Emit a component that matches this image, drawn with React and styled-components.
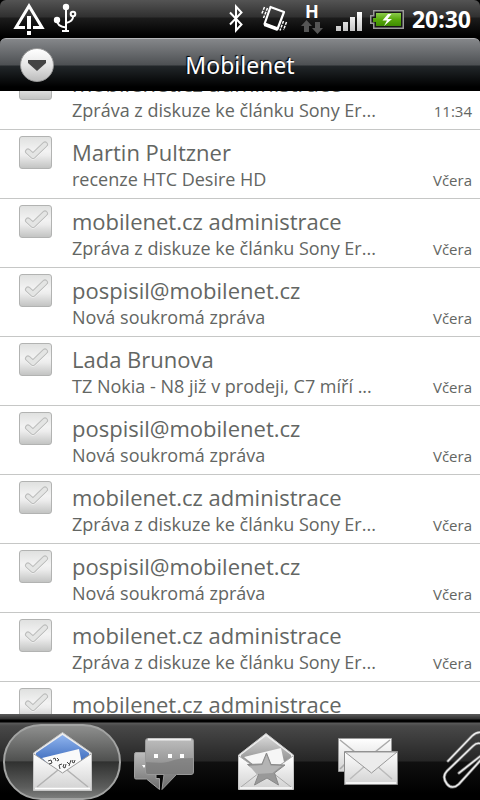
import React, { useLayoutEffect, useRef, useState } from 'react';
import styled, { createGlobalStyle } from 'styled-components';

const GlobalStyle = createGlobalStyle`
  * {
    box-sizing: border-box;
  }

  body {
    margin: 0;
    background: #000;
    font-family: 'Open Sans', 'Noto Sans', sans-serif;
  }
`;

const Screen = styled.div`
  display: flex;
  flex-direction: column;
  height: 100vh;
  overflow: hidden;
`;

const StatusBar = styled.div`
  display: flex;
  align-items: center;
  justify-content: space-between;
  flex: none;
  height: 38px;
  padding: 0 9px 0 12px;
  border-radius: 6px 6px 0 0;
  background: linear-gradient(#545454 0, #303030 17px, #1c1c1c 18px, #000 36px);
  color: #fff;
`;

const StatusGroup = styled.div`
  display: flex;
  align-items: center;
  gap: ${({ $gap }) => $gap}px;

  svg {
    display: block;
  }
`;

const Network = styled.span`
  display: flex;
  flex-direction: column;
  align-items: center;
  width: 24px;
  font: bold 18px/16px 'Noto Sans', sans-serif;
`;

const Clock = styled.time`
  font-family: 'Noto Sans', sans-serif;
  font-size: 23px;
  line-height: 32px;
  font-weight: bold;
`;

const TitleBar = styled.header`
  display: grid;
  grid-template-columns: 34px 1fr 34px;
  align-items: center;
  flex: none;
  height: 53px;
  padding: 0 20px;
  border-top: 1px solid #b4b6b8;
  border-radius: 6px 6px 0 0;
  background: linear-gradient(#85878a 0, #4d5053 26px, #22272a 27px, #000 48px);
`;

const Title = styled.h1`
  margin: 0;
  color: #fff;
  font-family: 'Noto Sans', sans-serif;
  font-size: 23px;
  line-height: 32px;
  font-weight: normal;
  text-align: center;
  text-shadow: -1px -1px 1px #000;
`;

const MenuButton = styled.button`
  display: flex;
  align-items: center;
  justify-content: center;
  width: 34px;
  height: 34px;
  padding: 0;
  border: 1px solid #9a9a9a;
  border-radius: 50%;
  background: linear-gradient(#fff, #e6e6e6 50%, #bcbcbc);
`;

const MessageList = styled.ul`
  flex: 1 1 0;
  min-height: 0;
  margin: 0;
  padding: 0;
  overflow-y: auto;
  scrollbar-width: none;
  background: #fff;
  list-style: none;
`;

const MessageRow = styled.li`
  display: flex;
  gap: 20px;
  height: 69px;
  padding: 6px 8px 0 19px;
  border-bottom: 1px solid #c6c7c6;
  color: #636663;
`;

const CheckLabel = styled.label`
  display: grid;
  flex: none;
  width: 33px;
  height: 33px;

  svg {
    grid-area: 1 / 1;
    pointer-events: none;
  }
`;

const CheckInput = styled.input`
  grid-area: 1 / 1;
  appearance: none;
  width: 33px;
  height: 33px;
  margin: 0;
  border: 1px solid #b2b3b2;
  border-radius: 3px;
  background: linear-gradient(#e0e1e0, #f3f3f3 45%, #ececec 60%, #c3c4c3);
`;

const MessageBody = styled.div`
  flex: 1;
  min-width: 0;
`;

const Sender = styled.div`
  padding-top: 2px;
  font-size: 22px;
  line-height: 28px;
  white-space: nowrap;
`;

const SubjectLine = styled.div`
  display: flex;
  align-items: baseline;
  justify-content: space-between;
  font-size: 18px;
  line-height: 26px;
  white-space: nowrap;
`;

const Received = styled.time`
  font-size: 15px;
`;

const TabBar = styled.nav`
  display: flex;
  flex: none;
  height: 86px;
  padding: 10px 0 0 11px;
  overflow: hidden;
  background: linear-gradient(#5c5c5c 0, #303030 5px, #000 6px, #000 8px, #5a5a5a 9px, #484848 12px, #262626 47px, #101010 48px, #000 80px);
`;

const Tab = styled.button`
  display: flex;
  align-items: center;
  justify-content: center;
  flex: none;
  width: ${({ $active }) => ($active ? 118 : 102)}px;
  height: 76px;
  margin: ${({ $active }) => ($active ? '0 -8px' : '0')};
  padding: 0;
  border: ${({ $active }) => ($active ? '2px solid #a2a3a2' : '0')};
  border-radius: 38px;
  background: ${({ $active }) =>
    $active ? 'linear-gradient(#8e8f8e, #505150 48%, #303130 50%, #5c5d5c 85%, #7c7d7c)' : 'none'};
  overflow: hidden;

  svg {
    flex: none;
  }
`;

const WarningIcon = () => (
  <svg width="34" height="34" viewBox="12 2 34 34" aria-hidden="true">
    <path d="M25 27.5H16L29 6l13 21.5h-9" fill="none" stroke="#fff" strokeWidth="3" />
    <path d="M27 16h4v13h-4zM27 31h4v4h-4z" fill="#fff" />
  </svg>
);

const UsbIcon = () => (
  <svg width="26" height="34" viewBox="53 2 26 34" aria-hidden="true">
    <g fill="none" stroke="#fff" strokeWidth="2">
      <path d="M66 7v24M62 31h7M57 20c0 5 4 7 9 7.500M73 17c0 3-3 5-7 6" />
      <circle cx="73" cy="14" r="2.300" />
    </g>
    <circle cx="66" cy="7" r="3.200" fill="#fff" />
    <circle cx="57" cy="20" r="3.200" fill="#fff" />
  </svg>
);

const BluetoothIcon = () => (
  <svg width="16" height="30" viewBox="226 4 16 30" aria-hidden="true">
    <path d="M228 12.500l11.500 12L234 30.500V6.500l5.500 6L228 24.500" fill="none" stroke="#fff" strokeWidth="2" />
  </svg>
);

const VibrateIcon = () => (
  <svg width="28" height="30" viewBox="259 4 28 30" aria-hidden="true">
    <path d="M269.500 7l13.500 5-6.500 17-13-5z" fill="none" stroke="#fff" strokeWidth="2.200" strokeLinejoin="round" />
    <path d="M264 22.500l13.500 5-1.200 3.500-13.500-5z" fill="#fff" />
    <path d="M263.500 7l-3 7.500M266.500 8l-4 10M285.500 22l-3 8M282.500 21l-3.500 9.500" stroke="#fff" strokeWidth="1.500" strokeDasharray="3 1" />
  </svg>
);

const DataArrows = () => (
  <svg width="24" height="16" viewBox="299 19 24 16" aria-hidden="true">
    <path d="M305.500 20l5.500 6h-3v6h-5v-6h-3z" fill="#555" />
    <path d="M316.500 34l-5.500-6h3v-6h5v6h3z" fill="#555" />
  </svg>
);

const SignalIcon = () => (
  <svg width="27" height="30" viewBox="336 4 27 30" aria-hidden="true">
    <defs>
      <linearGradient id="bars" x1="0" y1="0" x2="0" y2="1">
        <stop offset="0" stopColor="#fff" />
        <stop offset="1" stopColor="#c4c4c4" />
      </linearGradient>
    </defs>
    <path d="M336 26h5v5h-5zM343 22h5v9h-5zM350 17h5v14h-5zM357 12h5v19h-5z" fill="url(#bars)" />
  </svg>
);

const BatteryIcon = () => (
  <svg width="35" height="22" viewBox="370 8 35 22" aria-hidden="true">
    <defs>
      <linearGradient id="charge" x1="0" y1="0" x2="0" y2="1">
        <stop offset="0" stopColor="#8ccc4c" />
        <stop offset=".5" stopColor="#57a80c" />
        <stop offset="1" stopColor="#3e8c00" />
      </linearGradient>
    </defs>
    <path d="M373 10h31v19h-31v-5h-3v-9h3z" fill="#9a9a9a" />
    <path d="M374.500 11.500h28v16h-28v-5h-3v-6h3z" fill="#171717" />
    <path d="M376 13h25v13h-25v-4h-3v-4h3z" fill="url(#charge)" />
    <path d="M388 14l-5.500 6.500h4.500l-3 5.500 8-7h-4.500l4-5z" fill="#fff" />
  </svg>
);

const TickIcon = () => (
  <svg width="33" height="33" viewBox="0 0 33 33" aria-hidden="true">
    <g fill="none" strokeLinecap="round" strokeLinejoin="round">
      <path d="M9 16l5 4.500L26 9.500" stroke="#fff" strokeWidth="6" />
      <path d="M9 15.500l5 4.500L26 8.500" stroke="#bcbdbc" strokeWidth="6" />
      <path d="M9 15.500l5 4.500L26 8.500" stroke="#e4e5e4" strokeWidth="4" />
    </g>
  </svg>
);

const IconGradients = () => (
  <defs>
    <linearGradient id="paper" x1="0" y1="0" x2="0" y2="1">
      <stop offset="0" stopColor="#fff" />
      <stop offset="1" stopColor="#d2d2d2" />
    </linearGradient>
    <linearGradient id="blue" x1="0" y1="0" x2="0" y2="1">
      <stop offset="0" stopColor="#8fb4ee" />
      <stop offset="1" stopColor="#3564b8" />
    </linearGradient>
    <linearGradient id="grey" x1="0" y1="0" x2="0" y2="1">
      <stop offset="0" stopColor="#d8d8d8" />
      <stop offset="1" stopColor="#8a8a8a" />
    </linearGradient>
    <linearGradient id="bubble" x1="0" y1="0" x2="0" y2="1">
      <stop offset="0" stopColor="#bdbdbd" />
      <stop offset="1" stopColor="#6c6c6c" />
    </linearGradient>
  </defs>
);

const OpenMailIcon = () => (
  <svg width="62" height="62" viewBox="31 731 62 62" aria-hidden="true">
    <IconGradients />
    <path d="M33.500 753L62.500 732.500 91.500 753v37.500h-58z" fill="#eee" stroke="#c6c6c6" />
    <path d="M36 753L62.500 735 89 753v12H36z" fill="url(#blue)" />
    <path d="M42 758l37-9 3 15-18 14z" fill="#fafafa" />
    <path d="M34 754l28.500 19L91 754v36H34z" fill="url(#paper)" />
    <path d="M34 754l28.500 19L91 754" fill="none" stroke="#999" />
    <g fill="none" stroke="#444">
      <path d="M48 761l3-1 1 3-3 1M53 759l2-1 1 3M57 758l2 2-2 1" />
      <path d="M59 765l1 4M59 765l3-1M64 764l-1 3 2 1 1-4M67 762l3 3M71 760l-2 6M73 760l-1 2 2 1 1-3" />
    </g>
    <path d="M37 787l21-17M88 787l-21-17" stroke="#b2b2b2" strokeWidth="1.500" />
    <path d="M35 788.500h55" stroke="#fff" strokeWidth="1.500" />
  </svg>
);

const ChatIcon = () => (
  <svg width="62" height="62" viewBox="133 731 62 62" aria-hidden="true">
    <path d="M136 752.500h20v26h3.500v11l-13-10.500H136q-1.500 0-1.500-1.500v-23q0-2 1.500-2z" fill="url(#bubble)" stroke="#a0a0a0" />
    <path d="M142 765h4l-2 3z" fill="#fff" />
    <path d="M148 738.500h43q2.500 0 2.500 2.500v31q0 2.500-2.500 2.500h-14.500L162 789.500l2-15h-16q-2.500 0-2.500-2.500v-31q0-2.500 2.500-2.500z" fill="url(#bubble)" stroke="#999" />
    <path d="M146 762q18 2 25-1t22-3v14q0 2-2 2h-43q-2 0-2-2z" fill="#777" opacity=".6" />
    <path d="M148 739.500h43" stroke="#eee" strokeWidth="2" />
    <path d="M154 754h4v4h-4zM168 754h4v4h-4zM180 754h4v4h-4z" fill="#fff" />
  </svg>
);

const StarMailIcon = () => (
  <svg width="62" height="62" viewBox="235 731 62 62" aria-hidden="true">
    <path d="M238.500 755L266 733.500 293.500 755v34.500h-55z" fill="#eee" stroke="#c6c6c6" />
    <path d="M241 755l25-19 25 19v9h-50z" fill="url(#grey)" />
    <path d="M244 757l37-9 3 14-18 13z" fill="#f6f6f6" />
    <path d="M239 756l27 19 27-19v33h-54z" fill="url(#paper)" />
    <path d="M239 756l27 19 27-19M241 787l18-14M291 787l-18-14" fill="none" stroke="#aaa" />
    <path d="M266.500 753l4.500 11.500 14 .500-10.500 8 4 12-11.500-7-12.500 7 4.500-12-11.500-8.500 14.500-.500z" fill="#999" stroke="#888" />
    <path d="M266.500 755l4 10.500 11 .500-9 7-16 1-7-8 13-1z" fill="#b4b4b4" />
    <path d="M240 788h52" stroke="#fff" strokeWidth="1.500" />
  </svg>
);

const MailStackIcon = () => (
  <svg width="62" height="62" viewBox="337 731 62 62" aria-hidden="true">
    <path d="M338.500 738.500h53v33h-53z" fill="url(#paper)" stroke="#999" />
    <path d="M340 740l25 20 25-20M340 769l10-10" fill="none" stroke="#aaa" strokeWidth="1.500" />
    <path d="M344.500 751.500h53v33h-53z" fill="url(#paper)" stroke="#8c8c8c" />
    <path d="M350 779l15-13M392 779l-15-13" stroke="#bbb" strokeWidth="1.500" />
    <path d="M345 752l26.500 21L397 752z" fill="#ececec" stroke="#999" />
    <path d="M346 783h50" stroke="#fff" strokeWidth="1.500" />
  </svg>
);

const clipPath =
  'M448 761l24-25c5-5 12-5 16 0s4 11 0 16l-29 32c-4 4-9 4-12 0s-4-9 0-13l26-25c4-4 9-3 11 0s1 6-1 8l-24 19';

const PaperclipIcon = () => (
  <svg width="62" height="62" viewBox="439 731 62 62" aria-hidden="true">
    <g fill="none" strokeLinecap="round">
      <path d={clipPath} stroke="#777" strokeWidth="3" />
      <path d={clipPath} stroke="#eee" strokeWidth="1.500" />
    </g>
  </svg>
);

const subject = 'Zpráva z diskuze ke článku Sony Er...';

const messages = [
  { sender: 'mobilenet.cz administrace', subject, received: '11:34' },
  { sender: 'Martin Pultzner', subject: 'recenze HTC Desire HD', received: 'Včera' },
  { sender: 'mobilenet.cz administrace', subject, received: 'Včera' },
  { sender: 'pospisil@mobilenet.cz', subject: 'Nová soukromá zpráva', received: 'Včera' },
  { sender: 'Lada Brunova', subject: 'TZ Nokia - N8 již v prodeji, C7 míří ...', received: 'Včera' },
  { sender: 'pospisil@mobilenet.cz', subject: 'Nová soukromá zpráva', received: 'Včera' },
  { sender: 'mobilenet.cz administrace', subject, received: 'Včera' },
  { sender: 'pospisil@mobilenet.cz', subject: 'Nová soukromá zpráva', received: 'Včera' },
  { sender: 'mobilenet.cz administrace', subject, received: 'Včera' },
  { sender: 'mobilenet.cz administrace', subject, received: 'Včera' },
];

const tabs = [
  { label: 'Inbox', Icon: OpenMailIcon },
  { label: 'Conversations', Icon: ChatIcon },
  { label: 'Favourites', Icon: StarMailIcon },
  { label: 'Unread', Icon: MailStackIcon },
  { label: 'Attachments', Icon: PaperclipIcon },
];

const Message = ({ message }) => (
  <MessageRow>
    <CheckLabel>
      <CheckInput type="checkbox" aria-label={message.sender} />
      <TickIcon />
    </CheckLabel>
    <MessageBody>
      <Sender>{message.sender}</Sender>
      <SubjectLine>
        <span>{message.subject}</span>
        <Received>{message.received}</Received>
      </SubjectLine>
    </MessageBody>
  </MessageRow>
);

const App = () => {
  const [active, setActive] = useState(0);
  const listRef = useRef(null);

  // the list opens scrolled a little way into the first message
  useLayoutEffect(() => {
    listRef.current.scrollTop = 30;
  }, []);

  return (
    <>
      <GlobalStyle />
      <Screen>
        <StatusBar>
          <StatusGroup $gap={7}>
            <WarningIcon />
            <UsbIcon />
          </StatusGroup>
          <StatusGroup $gap={7}>
            <StatusGroup $gap={16}>
              <BluetoothIcon />
              <StatusGroup $gap={12}>
                <VibrateIcon />
                <Network>
                  H
                  <DataArrows />
                </Network>
                <SignalIcon />
              </StatusGroup>
            </StatusGroup>
            <BatteryIcon />
            <Clock>20:30</Clock>
          </StatusGroup>
        </StatusBar>
        <TitleBar>
          <MenuButton aria-label="Accounts">
            <svg width="18" height="11" viewBox="0 0 18 11" aria-hidden="true">
              <path d="M0 0h18v3l-9 8-9-8z" fill="#444" />
            </svg>
          </MenuButton>
          <Title>Mobilenet</Title>
        </TitleBar>
        <MessageList ref={listRef}>
          {messages.map((message, index) => (
            <Message key={index} message={message} />
          ))}
        </MessageList>
        <TabBar>
          {tabs.map(({ label, Icon }, index) => (
            <Tab key={label} aria-label={label} $active={index === active} onClick={() => setActive(index)}>
              <Icon />
            </Tab>
          ))}
        </TabBar>
      </Screen>
    </>
  );
};

export default App;
